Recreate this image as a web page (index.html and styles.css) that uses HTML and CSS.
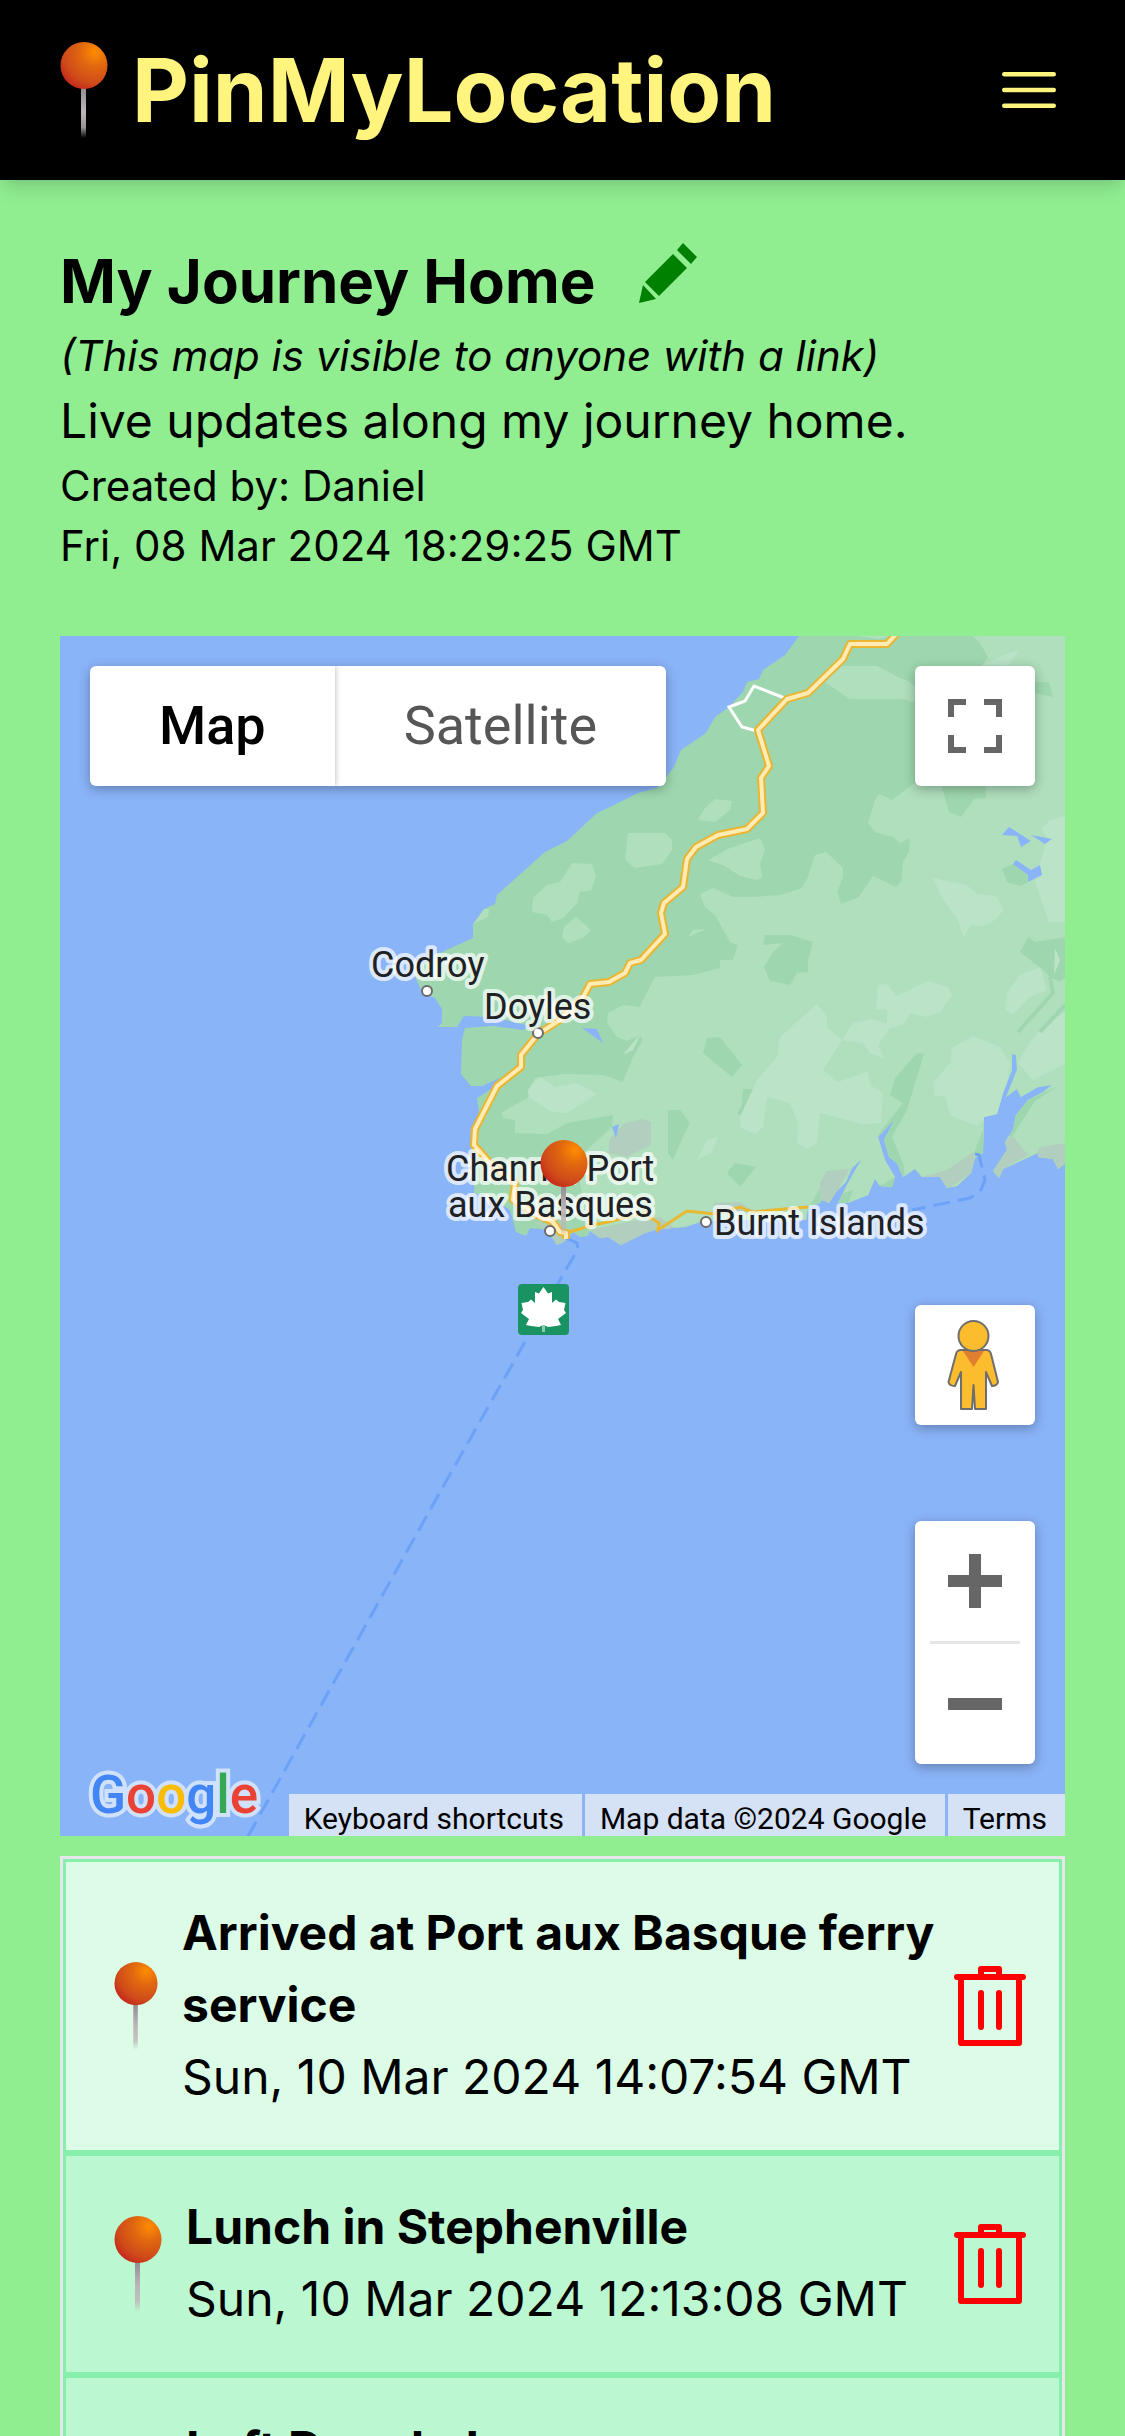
FILE: index.html
```html
<!DOCTYPE html>
<html lang="en">
<head>
<meta charset="utf-8">
<meta name="viewport" content="width=device-width, initial-scale=1">
<title>PinMyLocation</title>
<link rel="stylesheet" href="styles.css">
</head>
<body>
<svg class="defs" aria-hidden="true">
  <defs>
    <radialGradient id="head" gradientUnits="userSpaceOnUse" cx="35" cy="10" r="42">
      <stop offset="0" stop-color="#ff8c00"/>
      <stop offset="0.35" stop-color="#e0690f"/>
      <stop offset="0.75" stop-color="#cf4a1a"/>
      <stop offset="1" stop-color="#c3251b"/>
    </radialGradient>
    <linearGradient id="needle" x1="0" y1="0" x2="0" y2="1">
      <stop offset="0" stop-color="#8e8a8e"/>
      <stop offset="0.5" stop-color="#bdb6ba"/>
      <stop offset="0.8" stop-color="#bdb6ba" stop-opacity="0.8"/>
      <stop offset="1" stop-color="#bdb6ba" stop-opacity="0"/>
    </linearGradient>
    <symbol id="pin" viewBox="0 0 48 96">
      <rect x="21" y="44" width="5" height="52" fill="url(#needle)"/>
      <circle cx="24" cy="23.500" r="23.500" fill="url(#head)"/>
    </symbol>
    <symbol id="trash" viewBox="0 0 72 80">
      <path d="M3 11H69M7 11V77H65V11M27 27V61M45 27V61M27 11V3H45V11" fill="none" stroke="#f00" stroke-width="6" stroke-linecap="round" stroke-linejoin="round"/>
    </symbol>
  </defs>
</svg>

<header class="topbar">
  <a class="brand" href="#">
    <svg class="pin"><use href="#pin"/></svg>
    <span>PinMyLocation</span>
  </a>
  <button class="icon-button" type="button" aria-label="Open menu">
    <svg class="menu-icon" viewBox="0 0 24 24"><path d="M3.75 6.75h16.5M3.75 12h16.5M3.75 17.25h16.5"/></svg>
  </button>
</header>

<main class="content">
  <section class="details">
    <div class="title-row">
      <h1>My Journey Home</h1>
      <button class="icon-button" type="button" aria-label="Edit map">
        <svg class="edit-icon" viewBox="0 0 60 60"><path d="M0 60L4 42L17 56ZM34 11L48 25L20 53L6 39ZM44 0L58 14L52 21L38 7Z"/></svg>
      </button>
    </div>
    <p class="visibility">(This map is visible to anyone with a link)</p>
    <p class="description">Live updates along my journey home.</p>
    <p class="meta">Created by: Daniel</p>
    <p class="meta">Fri, 08 Mar 2024 18:29:25 GMT</p>
  </section>

  <section class="map" aria-label="Map">
    <svg class="map-canvas" viewBox="60 636 1005 1200" preserveAspectRatio="xMidYMid slice">
      <defs>
        <path id="land-shape" d="M799 630L799 636L785 655L763 670L759 679L747 682L743 692L729 707L715 717L706 733L681 750L674 767L657 788L638 793L610 807L597 813L567 841L545 852L497 895L495 904L484 909L473 924L473 938L440 953L412 970L422 992L435 998L442 1009L442 1023L438 1027L457 1027L464 1016L493 1017L530 1026L523 1030L493 1026L465 1028L462 1040L461 1074L471 1086L482 1086L502 1077L493 1088L477 1098L479 1112L473 1133L472 1150L475 1160L474 1193L495 1200L510 1210L516 1232L526 1236L530 1228L547 1230L557 1245L564 1242L573 1232L580 1237L588 1236L590 1231L600 1238L608 1237L621 1245L645 1233L655 1230L672 1228L685 1227L700 1222L720 1220L806 1220L808 1207L820 1203L822 1200L829 1203L837 1191L846 1182L852 1168L862 1159L857 1167L848 1183L838 1203L848 1203L868 1195L875 1179L880 1186L892 1187L895 1177L885 1160L878 1137L895 1119L884 1140L889 1157L897 1163L903 1177L915 1169L922 1177L940 1177L947 1188L957 1186L971 1173L975 1158L983 1153L984 1117L997 1114L1003 1093L1012 1070L1012 1054L1016 1055L1017 1070L1006 1097L1017 1089L1021 1097L1038 1087L1052 1085L1043 1092L1028 1100L1016 1115L1013 1130L1005 1142L1007 1150L993 1171L999 1178L1003 1169L1038 1153L1038 1157L1053 1159L1058 1169L1066 1163V630Z"/>
        <clipPath id="land-clip"><use href="#land-shape"/></clipPath>
      </defs>
      <rect class="water" x="-2000" y="-1000" width="5000" height="5000"/>
      <use class="land" href="#land-shape"/>
      <g clip-path="url(#land-clip)">
        <path class="plain" d="M967 630L980 643L988 657L982 665L950 700L915 783L892 800L879 794L875 800L868 823L875 832L893 837L900 843L910 838L909 852L903 862L902 880L896 887L873 876L859 897L841 904L837 892L843 877L843 868L826 852L815 855L808 877L802 888L780 895L753 897L733 897L713 888L700 894L705 907L715 915L730 942L738 945L733 960L720 960L720 968L693 975L655 977L643 1000L640 1007L623 1005L608 1013L607 1023L617 1037L627 1041L640 1035L643 1040L633 1057L623 1082L603 1075L563 1074L535 1078L528 1090L528 1098L502 1112L503 1118L515 1120L515 1133L547 1134L567 1123L613 1115L612 1127L590 1147L573 1163L580 1183L593 1250H1070V630Z"/>
        <path class="plain" d="M842 666L877 666L898 677L908 681L920 690L913 703L905 699L850 699L825 682ZM628 833L665 833L672 840L672 850L662 864L635 868L625 860ZM572 863L592 864L596 877L591 890L580 892L577 903L563 918L552 922L547 915L532 912L533 898L547 885L560 882ZM576 917L591 930L583 938L568 943L562 937L564 927ZM715 799L732 801L730 810L715 822L698 820L705 808ZM708 860L730 848L760 838L765 850L760 863L762 877L758 880L740 876L725 866ZM688 937L693 930L706 929ZM473 924L484 909L489 909L488 917ZM857 636H890L879 639Z"/>
        <path class="forest" d="M940 780H985L986 798L974 799L961 817L949 812ZM1035 682L1049 682L1053 697L1035 693ZM765 935L790 935L813 942L808 960L808 972L797 973L790 985L770 981L764 967L773 952L783 943L763 945ZM1002 869L1015 863L1028 876L1027 883L1020 886L1007 882ZM1028 937L1035 942L1066 937V977L1060 982L1050 977L1043 970L1020 952ZM707 1038L720 1037L742 1065L732 1077L720 1067L703 1053ZM668 1110L680 1110L690 1123L683 1137L673 1160L668 1153ZM917 1053L924 1054L907 1110L892 1137L903 1163L905 1180L890 1190L878 1187L895 1177L878 1135L903 1103L890 1095L895 1078ZM735 1163L756 1167L740 1187L727 1173ZM743 1089L759 1089L751 1116L737 1114L742 1105ZM1060 1085L1035 1101L1012 1137L1000 1130L1028 1100ZM820 1188L838 1195L853 1190L848 1205H810ZM983 1130V1155H973ZM614 1062L622 1068L621 1082Z"/>
        <path class="meadow" d="M933 878L967 885L977 894L996 896L1004 910L995 920L983 926L970 925L964 938L957 918L942 898ZM1066 816L1050 820L1041 829L1047 837L1042 857L1035 882L1049 922H1066ZM982 665L1019 649L1008 666ZM817 1004L827 1017L827 1027L842 1040L823 1070L837 1082L868 1072L870 1085L883 1093L881 1123L863 1124L820 1113L817 1143L807 1149L797 1143L798 1123L790 1103L767 1097L763 1127L755 1134L741 1128L740 1117L757 1080L777 1057L780 1037ZM842 1040L853 1023L872 1019L887 1023L887 1010L876 1009L878 985L887 984L897 996L928 981L948 987L952 995L940 1012L927 1017L910 1013L903 1025L890 1028L878 1045L885 1059L870 1053L863 1043ZM973 1036L1000 1047L1010 1063L1007 1083L997 1114L984 1120L977 1126L950 1115L945 1095L935 1097L933 1083L950 1063L952 1048ZM1066 1012L1050 1020L1030 1042L1018 1063L1033 1080L1066 1063ZM1040 967L1047 990L1030 997L1013 1014L1005 1010L1007 993L1020 975ZM528 1090L540 1077L555 1087L577 1083L597 1094L567 1113L552 1112L530 1098ZM707 1140L718 1137L712 1152L697 1160ZM1055 948L1060 960L1054 975ZM623 1055L641 1033L633 1050Z"/>
        <path class="town" d="M625 1123L643 1119L651 1122L651 1145L627 1157L609 1153L609 1140ZM590 1230L627 1222L660 1217L675 1228L621 1250L600 1240ZM533 1220L573 1232L557 1250L545 1230ZM820 1183L827 1171L850 1169L837 1191L829 1205L820 1200ZM922 1177L947 1170L973 1152L975 1160L971 1173L947 1190ZM1012 1135L1028 1155L1003 1169L999 1180L990 1170L1007 1150L1005 1142ZM1036 1155L1040 1147L1066 1143V1172H1055ZM713 1203L740 1202L755 1212L715 1213Z"/>
        <path class="stream" d="M1050 977L1053 993L1018 1032M1066 1004L1040 1032"/>
      </g>
      <path class="water" d="M1009 827L1031 841L1021 847L1017 836L1002 835ZM1031 835L1052 839L1045 844ZM1016 860L1031 870L1040 865L1042 875L1028 882L1028 875L1013 864ZM582 1028L597 1029L603 1043ZM612 1127L619 1124L616 1138Z"/>
      <path class="ferry" d="M566 1238L577 1243L578 1249L560 1280L435 1501L247 1838M975 1154L979 1155L985 1180L980 1192L970 1198L912 1210"/>
      <path class="trail" d="M787 699L754 686L745 701L729 707L742 727L757 731"/>
      <path class="coast-road" d="M566 1233L593 1225L608 1222L643 1213L659 1223L658 1230L687 1211L715 1214L740 1207L752 1212L808 1207"/>
      <defs>
        <path id="route" d="M900 630L887 644L850 644L843 659L808 693L787 699L758 730L769 766L761 778L763 813L747 829L718 835L696 847L687 859L683 887L664 903L661 913L665 934L641 960L630 963L625 973L609 982L590 984L583 997L560 1020L538 1034L521 1055L521 1067L497 1086L475 1129L474 1145L490 1163L507 1177L515 1183L513 1200L533 1213L553 1222L560 1232L566 1233V1239"/>
      </defs>
      <use class="casing" href="#route"/>
      <use class="surface" href="#route"/>
      <g class="place">
        <circle cx="427" cy="991" r="5"/><circle cx="538" cy="1033" r="5"/><circle cx="550" cy="1231" r="5"/><circle cx="706" cy="1222" r="5"/>
      </g>
      <g class="place-name">
        <text x="371" y="977">Codroy</text>
        <text x="484" y="1019">Doyles</text>
        <text x="446" y="1181">Channel-Port</text>
        <text x="448" y="1217">aux Basques</text>
        <text x="714" y="1235">Burnt Islands</text>
      </g>
      <g transform="translate(518 1284)">
        <rect width="51" height="51" rx="4" fill="#1a9363"/>
        <path fill="#fff" d="M25.500 3L30 9.500L34 8V19L38 15.500L41 18L47.500 19L46 26L48 29L40 35L43 41L38 42L30 43L25.500 41L21 43L13 42L8 41L11 35L3 29L5 26L3.500 19L10 18L13 15.500L17 19V8L21 9.500Z"/>
        <path fill="#8fc9b1" d="M24 41h3v7h-3z"/>
      </g>
      <use href="#pin" x="540" y="1140" width="48" height="96"/>
    </svg>

    <div class="map-type">
      <button class="active" type="button">Map</button>
      <button type="button">Satellite</button>
    </div>
    <button class="control fullscreen" type="button" aria-label="Toggle fullscreen view">
      <svg viewBox="0 0 54 54"><path d="M0 0H18V6H6V18H0ZM36 0H54V18H48V6H36ZM0 36H6V48H18V54H0ZM48 36H54V54H36V48H48Z" fill="#666"/></svg>
    </button>
    <div class="side-controls">
      <button class="control" type="button" aria-label="Street View">
        <svg class="pegman" viewBox="0 0 120 120">
          <path fill="#fbbc2d" stroke="#6e6e6e" stroke-width="2" stroke-linejoin="round" d="M46 45H71Q75 45 76 49L83 77Q82 81 77 81L71 67V104H60L58.500 80L57 104H46V67L40 81Q34 81 33.500 77L41 49Q42 45 46 45Z"/>
          <path fill="#e07f30" d="M48 46H69L58.500 62Z"/>
          <circle cx="58.500" cy="31" r="15" fill="#fbbc2d" stroke="#6e6e6e" stroke-width="2"/>
        </svg>
      </button>
      <div class="zoom">
        <button type="button" aria-label="Zoom in"><svg viewBox="0 0 54 54"><path d="M0 21H21V0H33V21H54V33H33V54H21V33H0Z" fill="#666"/></svg></button>
        <button type="button" aria-label="Zoom out"><svg viewBox="0 0 54 54"><path d="M0 21H54V33H0Z" fill="#666"/></svg></button>
      </div>
    </div>
    <a class="map-logo" href="#" aria-label="Google"><span class="g-blue">G</span><span class="g-red">o</span><span class="g-yellow">o</span><span class="g-blue">g</span><span class="g-green">l</span><span class="g-red">e</span></a>
    <div class="attribution">
      <button type="button">Keyboard shortcuts</button>
      <span>Map data ©2024 Google</span>
      <a href="#">Terms</a>
    </div>
  </section>

  <ul class="stops">
    <li class="stop current">
      <svg class="pin pin-small"><use href="#pin"/></svg>
      <div class="stop-text"><h2>Arrived at Port aux Basque ferry service</h2><p>Sun, 10 Mar 2024 14:07:54 GMT</p></div>
      <button class="icon-button" type="button" aria-label="Delete stop"><svg class="trash"><use href="#trash"/></svg></button>
    </li>
    <li class="stop">
      <svg class="pin"><use href="#pin"/></svg>
      <div class="stop-text"><h2>Lunch in Stephenville</h2><p>Sun, 10 Mar 2024 12:13:08 GMT</p></div>
      <button class="icon-button" type="button" aria-label="Delete stop"><svg class="trash"><use href="#trash"/></svg></button>
    </li>
    <li class="stop">
      <svg class="pin"><use href="#pin"/></svg>
      <div class="stop-text"><h2>Left Deer Lake</h2></div>
      <button class="icon-button" type="button" aria-label="Delete stop"><svg class="trash"><use href="#trash"/></svg></button>
    </li>
  </ul>
</main>
</body>
</html>
```
FILE: styles.css
```css
* { box-sizing: border-box; margin: 0; padding: 0; }

body {
  display: flex;
  flex-direction: column;
  height: 100vh;
  overflow: hidden;
  background: #90ee90;
  color: #000;
  font: 48px/72px Inter, "Liberation Sans", sans-serif;
}

button { border: 0; background: none; color: inherit; font: inherit; cursor: pointer; }
a { color: inherit; text-decoration: none; }
svg { display: block; flex: none; }
.defs { position: absolute; width: 0; height: 0; }
.icon-button { flex: none; }

.pin { width: 48px; height: 96px; }
.pin-small { width: 44px; height: 88px; }
.trash { width: 72px; height: 80px; }

.topbar {
  position: relative;
  display: flex;
  flex: none;
  align-items: center;
  justify-content: space-between;
  height: 180px;
  padding: 0 60px;
  background: #000;
  color: #fff47d;
  box-shadow: 0 12px 18px -3px rgba(0, 0, 0, .1), 0 6px 12px -6px rgba(0, 0, 0, .1);
}
.brand { display: flex; align-items: center; gap: 24px; font-size: 88px; font-weight: 700; line-height: 108px; }
.menu-icon { width: 72px; height: 72px; fill: none; stroke: currentColor; stroke-width: 1.5; stroke-linecap: round; }

.content { flex: 1; min-height: 0; overflow: hidden; padding: 60px 60px 0; }

.title-row { display: flex; align-items: flex-start; gap: 44px; padding-bottom: 2px; }
h1 { font-size: 60px; line-height: 82px; }
.edit-icon { width: 60px; height: 60px; margin-top: 3px; fill: #008000; }
.visibility { font-size: 42px; font-style: italic; line-height: 64px; }
.description { padding-bottom: 2px; line-height: 66px; }
.meta { font-size: 42px; line-height: 60px; }
.details { padding-bottom: 60px; }

.map { position: relative; height: 1200px; overflow: hidden; font-family: Roboto, "Liberation Sans", sans-serif; }
.map-canvas { width: 100%; height: 100%; }
.water { fill: #8ab4f8; }
.land, .forest { fill: #9ed7af; }
.plain { fill: #b0dfbd; }
.meadow { fill: #bbe3c8; }
.town { fill: #b1cebe; }
.stream { fill: none; stroke: #9ed7af; stroke-width: 4; }
.ferry { fill: none; stroke: #6ba1f7; stroke-width: 3; stroke-dasharray: 17 8; }
.trail { fill: none; stroke: #fff; stroke-width: 3; }
.coast-road { fill: none; stroke: #e8b830; stroke-width: 3; }
.casing { fill: none; stroke: #eab531; stroke-width: 8; stroke-linejoin: round; }
.surface { fill: none; stroke: #ffebb4; stroke-width: 4; stroke-linejoin: round; }
.place { fill: #fff; stroke: #6b6b6b; stroke-width: 2; }
.place-name {
  font-size: 36px;
  fill: #202124;
  stroke: #fff;
  stroke-opacity: .7;
  stroke-width: 8;
  stroke-linejoin: round;
  paint-order: stroke;
}

.map-type, .control, .zoom {
  background: #fff;
  border-radius: 6px;
  box-shadow: 0 3px 12px rgba(0, 0, 0, .3);
}
.map-type { position: absolute; top: 30px; left: 30px; display: flex; overflow: hidden; color: #565656; font-size: 54px; line-height: 120px; }
.map-type button { padding: 0 69px; }
.map-type .active { color: #000; font-weight: 500; box-shadow: 0 0 6px rgba(0, 0, 0, .3); }
.control { display: grid; place-items: center; width: 120px; height: 120px; }
.control svg, .zoom svg { width: 54px; height: 54px; }
.control .pegman { width: 120px; height: 120px; }
.fullscreen { position: absolute; top: 30px; right: 30px; }
.side-controls { position: absolute; right: 30px; bottom: 72px; display: grid; gap: 96px; }
.zoom button { display: grid; place-items: center; width: 120px; height: 120px; }
.zoom button + button { position: relative; height: 123px; padding-top: 3px; }
.zoom button + button::before { content: ""; position: absolute; top: 0; left: 15px; right: 15px; height: 3px; background: #e6e6e6; }

.map-logo {
  position: absolute;
  left: 30px;
  bottom: 8px;
  font-size: 53px;
  font-weight: 500;
  line-height: 66px;
  -webkit-text-stroke: 8px #d0e1fc;
  paint-order: stroke;
}
.g-blue { color: #4285f4; }
.g-red { color: #ea4335; }
.g-yellow { color: #fbbc04; }
.g-green { color: #34a853; }

.attribution { position: absolute; right: 0; bottom: 0; display: flex; gap: 3px; font-size: 30px; line-height: 34px; }
.attribution > * { padding: 8px 18px 0 15px; background: #d5e1f5; }

.stops { margin-top: 20px; border: 3px solid #e5e7eb; list-style: none; }
.stop { display: flex; align-items: center; padding: 35px 33px 35px 48px; border: 3px solid #86efac; background: #bbf7d0; }
.stop.current { background: #dcfce7; }
.stop-text { flex: 1; min-width: 0; min-height: 146px; margin-left: 24px; padding-bottom: 2px; }
.stop-text h2 { font-size: 48px; line-height: 72px; }
```
